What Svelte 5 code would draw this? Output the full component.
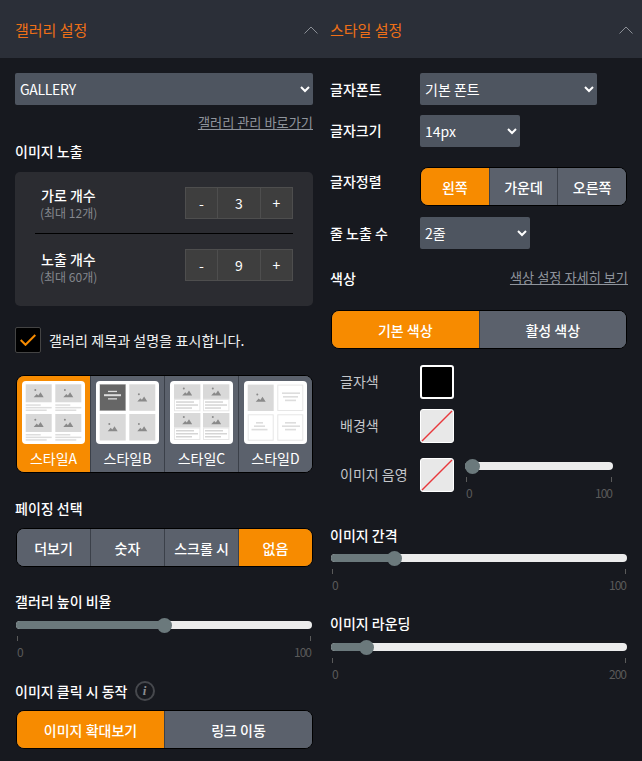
<script>
	const M = 'M0 5L3 1.6L4.6 3.2L6.8 0L10 5Z';

	// one small picture placeholder inside a thumbnail cell
	function pic(x, y, w, h, dark) {
		return {
			rects: [{ x, y, w, h, fill: dark ? '#666' : '#d9d9d9' }],
			dots: [{ cx: x + w / 2 - 3.4, cy: y + h / 2 - 3.2 }],
			hills: [{ x: x + w / 2 - 5, y: y + h / 2 - 1 }]
		};
	}

	function lines(list) {
		return list.map(([x, y, w, fill]) => ({ x, y, w, h: 1.5, fill: fill || '#ddd' }));
	}

	function build(parts, extra) {
		return {
			rects: parts.flatMap((p) => p.rects).concat(extra),
			dots: parts.flatMap((p) => p.dots),
			hills: parts.flatMap((p) => p.hills)
		};
	}

	function frame(x, y, w, h) {
		return [
			{ x, y, w, h, fill: '#e6e6e6' },
			{ x: x + 1, y: y + 1, w: w - 2, h: h - 2, fill: '#fff' }
		];
	}

	const cols = [3.7, 33.3];
	const rows = [3.3, 33];

	const thumbA = build(
		rows.flatMap((y) => cols.map((x) => pic(x, y, 26, 18))),
		rows.flatMap((y) =>
			cols.flatMap((x) =>
				lines([
					[x, y + 20, 15],
					[x, y + 22.6, 26],
					[x, y + 25.2, 21]
				])
			)
		)
	);

	const thumbB = build(
		[pic(33.3, 3.3, 26, 26.5), pic(3.7, 33, 26, 26.5), pic(33.3, 33, 26, 26.5)],
		[
			{ x: 3.4, y: 3, w: 26.6, h: 27, fill: '#ccc' },
			{ x: 4, y: 3.6, w: 25.4, h: 25.8, fill: '#666' },
			{ x: 12, y: 9.8, w: 9, h: 1.3, fill: '#ddd' },
			{ x: 8, y: 13.2, w: 17, h: 2, fill: '#ddd' },
			{ x: 12, y: 17.2, w: 9, h: 1.3, fill: '#ddd' }
		]
	);

	const thumbC = build(
		[3.3, 32].flatMap((y) => [4, 33].map((x) => pic(x, y, 26.4, 14.6))),
		[3.3, 32].flatMap((y) =>
			[4, 33].flatMap((x) => [
				...frame(x, y + 14.6, 26.4, 12.4),
				...lines([
					[x + 2, y + 17, 18, '#d5d5d5'],
					[x + 2, y + 20, 22, '#d5d5d5'],
					[x + 2, y + 23, 16, '#d5d5d5']
				])
			])
		)
	);

	const thumbD = build(
		[pic(3.7, 3.6, 26, 26.4)],
		[
			...frame(33.3, 3.6, 26, 26.4),
			...frame(3.7, 33.3, 26, 26.4),
			...frame(33.3, 33.3, 26, 26.4),
			{ x: 38, y: 11.4, w: 18, h: 1.6, fill: '#ddd' },
			{ x: 39, y: 15, w: 15, h: 1.6, fill: '#ddd' },
			{ x: 41, y: 18.6, w: 11, h: 1.6, fill: '#ddd' },
			{ x: 12, y: 41, w: 7, h: 1.6, fill: '#ddd' },
			{ x: 10, y: 44.4, w: 11, h: 1.6, fill: '#ddd' },
			{ x: 7.5, y: 47.8, w: 16, h: 1.6, fill: '#ddd' },
			{ x: 41, y: 41, w: 11, h: 1.6, fill: '#ddd' },
			{ x: 38, y: 44.4, w: 18, h: 1.6, fill: '#ddd' },
			{ x: 41, y: 47.8, w: 11, h: 1.6, fill: '#ddd' }
		]
	);

	const styles = [
		{ name: '스타일A', thumb: thumbA, on: true },
		{ name: '스타일B', thumb: thumbB },
		{ name: '스타일C', thumb: thumbC },
		{ name: '스타일D', thumb: thumbD }
	];

	const paging = [
		{ name: '더보기' },
		{ name: '숫자' },
		{ name: '스크롤 시' },
		{ name: '없음', on: true }
	];
	const clickAction = [{ name: '이미지 확대보기', on: true }, { name: '링크 이동' }];
	const align = [{ name: '왼쪽', on: true }, { name: '가운데' }, { name: '오른쪽' }];
	const colorTabs = [{ name: '기본 색상', on: true }, { name: '활성 색상' }];
</script>

{#snippet chevron()}
	<svg class="chevron" width="14" height="8" viewBox="0 0 14 8" fill="none" stroke="#8b8f96" stroke-width="1">
		<path d="M.5 7.5L7 1L13.5 7.5" />
	</svg>
{/snippet}

{#snippet segments(items)}
	<div class="seg">
		{#each items as item}
			<button class="seg-btn" class:on={item.on}>{item.name}</button>
		{/each}
	</div>
{/snippet}

{#snippet slider(value, max)}
	<div class="slider">
		<div class="track">
			<div class="fill" style="width: calc(7.5px + (100% - 15px) * {value / 100})"></div>
			<div class="thumb" style="left: calc((100% - 15px) * {value / 100})"></div>
		</div>
		<div class="ticks"><i></i><i></i></div>
		<div class="scale"><span>0</span><span>{max}</span></div>
	</div>
{/snippet}

{#snippet stepper(value)}
	<div class="stepper">
		<button>-</button>
		<span>{value}</span>
		<button>+</button>
	</div>
{/snippet}

{#snippet none()}
	<div class="swatch none">
		<svg viewBox="0 0 32 32" width="32" height="32"><path d="M1 31L31 1" stroke="#e8383c" stroke-width="1.4" /></svg>
	</div>
{/snippet}

<div class="page">
	<section class="col left">
		<header class="head">
			<h2>갤러리 설정</h2>
			{@render chevron()}
		</header>
		<div class="body">
			<select class="full"><option>GALLERY</option></select>
			<div class="link-row"><a href="#gallery">갤러리 관리 바로가기</a></div>

			<h3 class="expose-title">이미지 노출</h3>
			<div class="box">
				<div class="box-row">
					<div class="box-label up">
						<strong>가로 개수</strong>
						<small>(최대 12개)</small>
					</div>
					{@render stepper(3)}
				</div>
				<div class="box-line"></div>
				<div class="box-row">
					<div class="box-label">
						<strong>노출 개수</strong>
						<small>(최대 60개)</small>
					</div>
					{@render stepper(9)}
				</div>
			</div>

			<label class="check">
				<span class="check-box">
					<svg width="16" height="12" viewBox="0 0 16 12" fill="none" stroke="#f78b00" stroke-width="2">
						<path d="M.7 6L5.5 10.8L15.3 1" />
					</svg>
				</span>
				갤러리 제목과 설명을 표시합니다.
			</label>

			<div class="seg styles">
				{#each styles as s}
					<button class="seg-btn style" class:on={s.on}>
						<svg class="thumbnail" width="63" height="63" viewBox="0 0 63 63">
							<rect width="63" height="63" rx="4" fill="#fff" />
							{#each s.thumb.rects as r}
								<rect x={r.x} y={r.y} width={r.w} height={r.h} fill={r.fill} />
							{/each}
							{#each s.thumb.dots as d}
								<circle cx={d.cx} cy={d.cy} r="1" fill="#8a8a8a" />
							{/each}
							{#each s.thumb.hills as h}
								<path d={M} transform="translate({h.x} {h.y})" fill="#8a8a8a" />
							{/each}
						</svg>
						<span>{s.name}</span>
					</button>
				{/each}
			</div>

			<h3 class="paging-title">페이징 선택</h3>
			{@render segments(paging)}

			<h3 class="height-title">갤러리 높이 비율</h3>
			{@render slider(50, 100)}

			<h3 class="click-title">
				이미지 클릭 시 동작
				<span class="info">i</span>
			</h3>
			{@render segments(clickAction)}
		</div>
	</section>

	<section class="col right">
		<header class="head">
			<h2>스타일 설정</h2>
			{@render chevron()}
		</header>
		<div class="body">
			<div class="form-row">
				<span class="form-label">글자폰트</span>
				<select class="w-font"><option>기본 폰트</option></select>
			</div>
			<div class="form-row size-row">
				<span class="form-label">글자크기</span>
				<select class="w-size"><option>14px</option></select>
			</div>
			<div class="form-row align-row">
				<span class="form-label">글자정렬</span>
				<div class="align-seg">{@render segments(align)}</div>
			</div>
			<div class="form-row lines-row">
				<span class="form-label">줄 노출 수</span>
				<select class="w-lines"><option>2줄</option></select>
			</div>

			<div class="color-head">
				<h3>색상</h3>
				<a href="#color">색상 설정 자세히 보기</a>
			</div>
			{@render segments(colorTabs)}

			<div class="color-row first">
				<span class="color-label">글자색</span>
				<div class="swatch black"></div>
			</div>
			<div class="color-row">
				<span class="color-label">배경색</span>
				{@render none()}
			</div>
			<div class="color-row shadow">
				<span class="color-label">이미지 음영</span>
				{@render none()}
				<div class="shadow-slider">{@render slider(0, 100)}</div>
			</div>

			<h3 class="gap-title">이미지 간격</h3>
			{@render slider(20, 100)}

			<h3 class="round-title">이미지 라운딩</h3>
			{@render slider(10, 200)}
		</div>
	</section>
</div>

<style>
	:global(body) {
		background: #17191f;
		color: #fff;
		font-family: 'Noto Sans CJK KR', 'Noto Sans', sans-serif;
	}

	.page {
		display: flex;
		width: 642px;
		height: 761px;
		overflow: hidden;
		background: #17191f;
	}

	.col {
		flex: none;
	}

	.left {
		width: 315px;
	}

	.right {
		width: 327px;
	}

	.head {
		display: flex;
		align-items: center;
		justify-content: space-between;
		height: 58px;
		background: #2b2f38;
		padding: 0 9px 0 15px;
	}

	.left .head {
		padding-right: 0;
	}

	.head h2 {
		margin: 2px 0 0;
		font-size: 15px;
		font-weight: 400;
		line-height: 20px;
		color: #ef6f17;
	}

	.chevron {
		margin-top: 1px;
	}

	.left .chevron {
		margin-right: -3px;
		position: relative;
		z-index: 1;
	}

	.body {
		padding: 15px 0 0 15px;
	}

	.left .body {
		padding-right: 2px;
	}

	.right .body {
		padding-right: 15px;
	}

	h3 {
		margin: 0;
		font-size: 14px;
		font-weight: 500;
		line-height: 20px;
		color: #fff;
	}

	select {
		display: block;
		height: 32px;
		background: #4e5560;
		color: #fff;
		border: none;
		border-radius: 2px;
		padding: 0 0 0 1px;
		font: 400 14px 'Noto Sans CJK KR', 'Noto Sans', sans-serif;
	}

	.full {
		width: 298px;
		letter-spacing: -0.3px;
	}

	.link-row {
		display: flex;
		justify-content: flex-end;
		margin-top: 8px;
		height: 20px;
		line-height: 20px;
	}

	a {
		color: #8f949c;
		font-size: 13.2px;
		line-height: 20px;
	}

	.color-head a {
		margin-right: -1px;
	}

	.expose-title {
		margin-top: 8px;
	}

	.box {
		margin-top: 11px;
		height: 134px;
		box-sizing: border-box;
		background: #2b2c31;
		border-radius: 5px;
		padding: 15px 20px;
	}

	.box-row {
		display: flex;
		justify-content: space-between;
		height: 32px;
	}

	.box-line {
		height: 1px;
		background: #000;
		margin: 14px 0 15px;
	}

	.box-label {
		display: flex;
		flex-direction: column;
		padding-left: 6px;
	}

	.box-label.up {
		margin-top: -2px;
	}

	.box-label strong {
		font-size: 14px;
		font-weight: 500;
		line-height: 20px;
	}

	.box-label small {
		font-size: 12px;
		line-height: 16px;
		color: #84878d;
		margin-left: -1px;
	}

	.stepper {
		display: grid;
		grid-template-columns: 31px 44px 31px;
		height: 32px;
		box-sizing: border-box;
		border: 1px solid #4e4e4e;
		background: #3e3e3e;
		font-size: 14px;
	}

	.stepper button {
		background: none;
		border: none;
		padding: 0;
		color: #fff;
		font: 400 14px 'Noto Sans CJK KR', 'Noto Sans', sans-serif;
	}

	.stepper span {
		display: flex;
		align-items: center;
		justify-content: center;
		border: solid #4e4e4e;
		border-width: 0 1px;
	}

	.check {
		display: flex;
		align-items: center;
		gap: 8px;
		margin-top: 21px;
		font-size: 14px;
		letter-spacing: 0.1px;
		color: #f2f2f2;
	}

	.check-box {
		display: flex;
		align-items: center;
		justify-content: center;
		width: 26px;
		height: 26px;
		box-sizing: border-box;
		background: #000;
		border: 1px solid #444;
		border-radius: 2px;
	}

	.seg {
		display: flex;
		height: 39px;
		box-sizing: border-box;
		margin-left: 1px;
		border: 1px solid #000;
		border-radius: 8px;
		overflow: hidden;
		background: #5b616c;
	}

	.left .slider {
		margin-right: 1px;
	}

	.seg-btn {
		flex: 1 1 0;
		min-width: 0;
		padding: 0;
		border: none;
		border-left: 1px solid #3b4049;
		background: #5b616c;
		color: #fff;
		font: 500 14px 'Noto Sans CJK KR', 'Noto Sans', sans-serif;
	}

	.seg-btn:first-child {
		border-left: none;
	}

	.seg-btn.on {
		background: #f78b00;
	}

	.styles {
		height: 98px;
		margin-top: 22px;
	}

	.style {
		display: flex;
		flex-direction: column;
		align-items: center;
		padding-top: 5px;
	}

	.thumbnail {
		display: block;
		flex: none;
	}

	.style span {
		line-height: 20px;
		margin-top: 4px;
		font-weight: 400;
		font-size: 14px;
	}

	.paging-title {
		margin-top: 25px;
	}

	.paging-title + .seg {
		margin-top: 10px;
	}

	.height-title {
		margin-top: 24px;
	}

	.slider {
		margin: 10px 0 0 1px;
	}

	.track {
		position: relative;
		height: 8px;
		background: #ececec;
		border-radius: 4px;
	}

	.fill {
		height: 8px;
		background: #6b797c;
		border-radius: 4px 0 0 4px;
	}

	.thumb {
		position: absolute;
		top: -3.5px;
		width: 15px;
		height: 15px;
		background: #6b797c;
		border-radius: 50%;
	}

	.ticks {
		display: flex;
		justify-content: space-between;
		height: 5px;
		margin-top: 7px;
		padding: 0 1px;
	}

	.ticks i {
		width: 1px;
		background: #5a5a5a;
	}

	.scale {
		display: flex;
		justify-content: space-between;
		font-size: 12px;
		line-height: 16px;
		letter-spacing: -1px;
		color: #5a5a5a;
		margin-top: 3px;
	}

	.scale span {
		padding: 0 1px;
	}

	.click-title {
		display: flex;
		align-items: center;
		gap: 7px;
		margin-top: 21px;
		margin-bottom: 9px;
	}

	.info {
		display: flex;
		align-items: center;
		justify-content: center;
		width: 20px;
		height: 20px;
		box-sizing: border-box;
		border: 2px solid #46484d;
		border-radius: 50%;
		color: #8a8d92;
		font: italic 700 13px 'Liberation Serif', serif;
	}

	.form-row {
		display: flex;
		align-items: center;
		height: 32px;
	}

	.form-label {
		width: 90px;
		flex: none;
		font-size: 14px;
		font-weight: 500;
	}

	.size-row {
		margin-top: 10px;
	}

	.size-row .form-label {
		margin-top: -2px;
	}

	.align-row {
		margin-top: 20px;
		height: 39px;
		align-items: flex-start;
	}

	.align-row .form-label {
		margin-top: 4px;
	}

	.align-seg {
		width: 207px;
	}

	.align-seg .seg {
		margin: 0;
	}

	.lines-row {
		margin-top: 11px;
	}

	.w-font {
		width: 177px;
	}

	.w-size {
		width: 100px;
	}

	.w-lines {
		width: 110px;
	}

	.color-head {
		display: flex;
		align-items: center;
		justify-content: space-between;
		margin-top: 19px;
		margin-bottom: 22px;
		height: 20px;
	}

	.color-row {
		display: flex;
		align-items: center;
		margin-top: 10px;
	}

	.color-row.first {
		margin-top: 16px;
	}

	.color-row.shadow {
		margin-top: 15px;
		position: relative;
	}

	.color-label {
		width: 80px;
		margin-left: 10px;
		padding-bottom: 3px;
		flex: none;
		font-size: 14px;
		color: #c4c6ca;
	}

	.swatch {
		width: 34px;
		height: 34px;
		box-sizing: border-box;
		border: 1px solid #fff;
		border-radius: 3px;
		flex: none;
	}

	.swatch.black {
		background: #000;
		border-width: 2px;
	}

	.swatch.none {
		background: #e8e8e8;
	}

	.swatch svg {
		display: block;
	}

	.shadow-slider {
		position: absolute;
		left: 135px;
		top: 4px;
		width: 148px;
	}

	.shadow-slider .slider {
		margin: 0;
	}

	.gap-title {
		margin-top: 33px;
	}

	.gap-title + .slider {
		margin-top: 9px;
	}

	.round-title {
		margin-top: 20px;
	}

	.round-title + .slider {
		margin-top: 10px;
	}
</style>
